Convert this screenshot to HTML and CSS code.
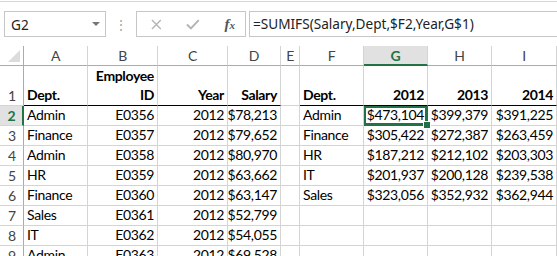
FILE: index.html
```html
<!DOCTYPE html>
<html lang="en">
<head>
  <meta charset="UTF-8">
  <title>SUMIFS by Dept and Year</title>
  <link rel="stylesheet" href="styles.css">
</head>
<body>

  <div class="formula-bar">
    <div class="name-box">
      <span>G2</span>
      <span class="caret"></span>
    </div>
    <div class="grip">&#8942;</div>
    <div class="buttons">
      <svg class="btn-icon" width="11" height="11" viewBox="0 0 11 11">
        <path d="M1 1 L10 10 M10 1 L1 10" stroke="#b4b4b4" stroke-width="1.4" fill="none"/>
      </svg>
      <svg class="btn-icon" width="14" height="11" viewBox="0 0 14 11">
        <path d="M1 5.5 L5 9.5 L13 1" stroke="#b4b4b4" stroke-width="2" fill="none"/>
      </svg>
      <span class="fx">f<small>x</small></span>
    </div>
    <div class="formula">=SUMIFS(Salary,Dept,$F2,Year,G$1)</div>
  </div>

  <div class="sheet">
    <!-- column headers -->
    <div class="corner"><span class="corner-tri"></span></div>
    <div class="col-head">A</div>
    <div class="col-head">B</div>
    <div class="col-head">C</div>
    <div class="col-head">D</div>
    <div class="col-head">E</div>
    <div class="col-head">F</div>
    <div class="col-head active">G</div>
    <div class="col-head">H</div>
    <div class="col-head">I</div>

    <!-- row 1 -->
    <div class="row-head">1</div>
    <div class="cell head">Dept.</div>
    <div class="cell head num">Employee<br>ID</div>
    <div class="cell head num">Year</div>
    <div class="cell head num">Salary</div>
    <div class="cell"></div>
    <div class="cell head">Dept.</div>
    <div class="cell head num">2012</div>
    <div class="cell head num">2013</div>
    <div class="cell head num">2014</div>

    <!-- row 2 -->
    <div class="row-head active">2</div>
    <div class="cell">Admin</div>
    <div class="cell num">E0356</div>
    <div class="cell num">2012</div>
    <div class="cell num">$78,213</div>
    <div class="cell"></div>
    <div class="cell">Admin</div>
    <div class="cell num selected">$473,104<span class="fill-handle"></span></div>
    <div class="cell num">$399,379</div>
    <div class="cell num">$391,225</div>

    <!-- row 3 -->
    <div class="row-head">3</div>
    <div class="cell">Finance</div>
    <div class="cell num">E0357</div>
    <div class="cell num">2012</div>
    <div class="cell num">$79,652</div>
    <div class="cell"></div>
    <div class="cell">Finance</div>
    <div class="cell num">$305,422</div>
    <div class="cell num">$272,387</div>
    <div class="cell num">$263,459</div>

    <!-- row 4 -->
    <div class="row-head">4</div>
    <div class="cell">Admin</div>
    <div class="cell num">E0358</div>
    <div class="cell num">2012</div>
    <div class="cell num">$80,970</div>
    <div class="cell"></div>
    <div class="cell">HR</div>
    <div class="cell num">$187,212</div>
    <div class="cell num">$212,102</div>
    <div class="cell num">$203,303</div>

    <!-- row 5 -->
    <div class="row-head">5</div>
    <div class="cell">HR</div>
    <div class="cell num">E0359</div>
    <div class="cell num">2012</div>
    <div class="cell num">$63,662</div>
    <div class="cell"></div>
    <div class="cell">IT</div>
    <div class="cell num">$201,937</div>
    <div class="cell num">$200,128</div>
    <div class="cell num">$239,538</div>

    <!-- row 6 -->
    <div class="row-head">6</div>
    <div class="cell">Finance</div>
    <div class="cell num">E0360</div>
    <div class="cell num">2012</div>
    <div class="cell num">$63,147</div>
    <div class="cell"></div>
    <div class="cell">Sales</div>
    <div class="cell num">$323,056</div>
    <div class="cell num">$352,932</div>
    <div class="cell num">$362,944</div>

    <!-- row 7 -->
    <div class="row-head">7</div>
    <div class="cell">Sales</div>
    <div class="cell num">E0361</div>
    <div class="cell num">2012</div>
    <div class="cell num">$52,799</div>
    <div class="cell"></div>
    <div class="cell"></div>
    <div class="cell"></div>
    <div class="cell"></div>
    <div class="cell"></div>

    <!-- row 8 -->
    <div class="row-head">8</div>
    <div class="cell">IT</div>
    <div class="cell num">E0362</div>
    <div class="cell num">2012</div>
    <div class="cell num">$54,055</div>
    <div class="cell"></div>
    <div class="cell"></div>
    <div class="cell"></div>
    <div class="cell"></div>
    <div class="cell"></div>

    <!-- row 9 -->
    <div class="row-head">9</div>
    <div class="cell">Admin</div>
    <div class="cell num">E0363</div>
    <div class="cell num">2012</div>
    <div class="cell num">$69,528</div>
    <div class="cell"></div>
    <div class="cell"></div>
    <div class="cell"></div>
    <div class="cell"></div>
    <div class="cell"></div>
  </div>

</body>
</html>
```

FILE: styles.css
```css
html, body {
  margin: 0;
  padding: 0;
  background: #fff;
}
body {
  height: 256px;
  overflow: hidden;
  border-top: 1px solid #d6d6d6;
  margin-top: 1px;
  font-family: 'Lato', sans-serif;
  color: #000;
}

/* formula bar */
.formula-bar {
  display: flex;
  align-items: center;
  height: 26px;
  margin: 9px 0 9px 4px;
  font-family: 'Noto Sans', sans-serif;
  font-size: 13.6px;
}
.name-box {
  box-sizing: border-box;
  width: 102px;
  height: 26px;
  border: 1px solid #c6c6c6;
  display: flex;
  align-items: center;
  justify-content: space-between;
  padding: 0 5px 0 6px;
  color: #222;
}
.caret {
  width: 0;
  height: 0;
  border-left: 4px solid transparent;
  border-right: 4px solid transparent;
  border-top: 4px solid #777;
}
.grip {
  width: 30px;
  text-align: center;
  color: #a8a8a8;
  font-size: 14px;
}
.buttons {
  box-sizing: border-box;
  width: 110px;
  height: 26px;
  border: 1px solid #c6c6c6;
  display: flex;
  align-items: center;
  padding: 0 10px 0 14px;
  gap: 24px;
}
.fx {
  font-family: 'Liberation Serif', serif;
  font-style: italic;
  font-weight: bold;
  font-size: 15px;
  color: #555;
  margin-left: 1px;
}
.fx small {
  font-size: 11px;
}
.formula {
  box-sizing: border-box;
  flex: 1;
  height: 26px;
  margin-left: 3px;
  border: 1px solid #c6c6c6;
  border-right: none;
  padding-left: 3px;
  line-height: 24px;
  color: #222;
  white-space: nowrap;
}

/* sheet grid */
.sheet {
  display: grid;
  grid-template-columns: 24px 64px 70px 70px 53px 19px 64px 64px 64px 65px;
  grid-template-rows: 20px 40px repeat(8, 20px);
  font-size: 14px;
  letter-spacing: -0.35px;
}
.corner,
.col-head,
.row-head,
.cell {
  box-sizing: border-box;
  border-right: 1px solid #d4d4d4;
  border-bottom: 1px solid #d4d4d4;
}
.corner {
  position: relative;
  border-right-color: #ababab;
  border-bottom-color: #ababab;
}
.corner-tri {
  position: absolute;
  right: 3px;
  bottom: 3px;
  width: 0;
  height: 0;
  border-left: 12px solid transparent;
  border-bottom: 12px solid #dcdcdc;
}
.col-head {
  border-bottom-color: #ababab;
  text-align: center;
  color: #444;
  line-height: 19px;
}
.col-head.active {
  background: #e1e1e1;
  color: #217346;
  font-weight: bold;
  border-bottom: 2px solid #217346;
}
.row-head {
  border-right-color: #ababab;
  color: #444;
  display: flex;
  align-items: flex-end;
  justify-content: center;
  padding-bottom: 1px;
  padding-left: 1px;
}
.row-head.active {
  background: #e1e1e1;
  color: #217346;
  font-weight: bold;
  border-right: 2px solid #217346;
}
.cell {
  display: flex;
  align-items: flex-end;
  padding: 0 3px 1px 3px;
  white-space: nowrap;
  line-height: 19px;
}
.cell.num {
  justify-content: flex-end;
  text-align: right;
}
.cell.head {
  font-weight: bold;
  border-bottom-color: #000;
}
.cell.selected {
  position: relative;
  box-shadow: inset 0 0 0 2px #217346;
  border-right-color: #217346;
  border-bottom-color: #217346;
}
.fill-handle {
  position: absolute;
  right: -4px;
  bottom: -4px;
  width: 6px;
  height: 6px;
  background: #217346;
  border: 1px solid #fff;
  z-index: 2;
}
```
